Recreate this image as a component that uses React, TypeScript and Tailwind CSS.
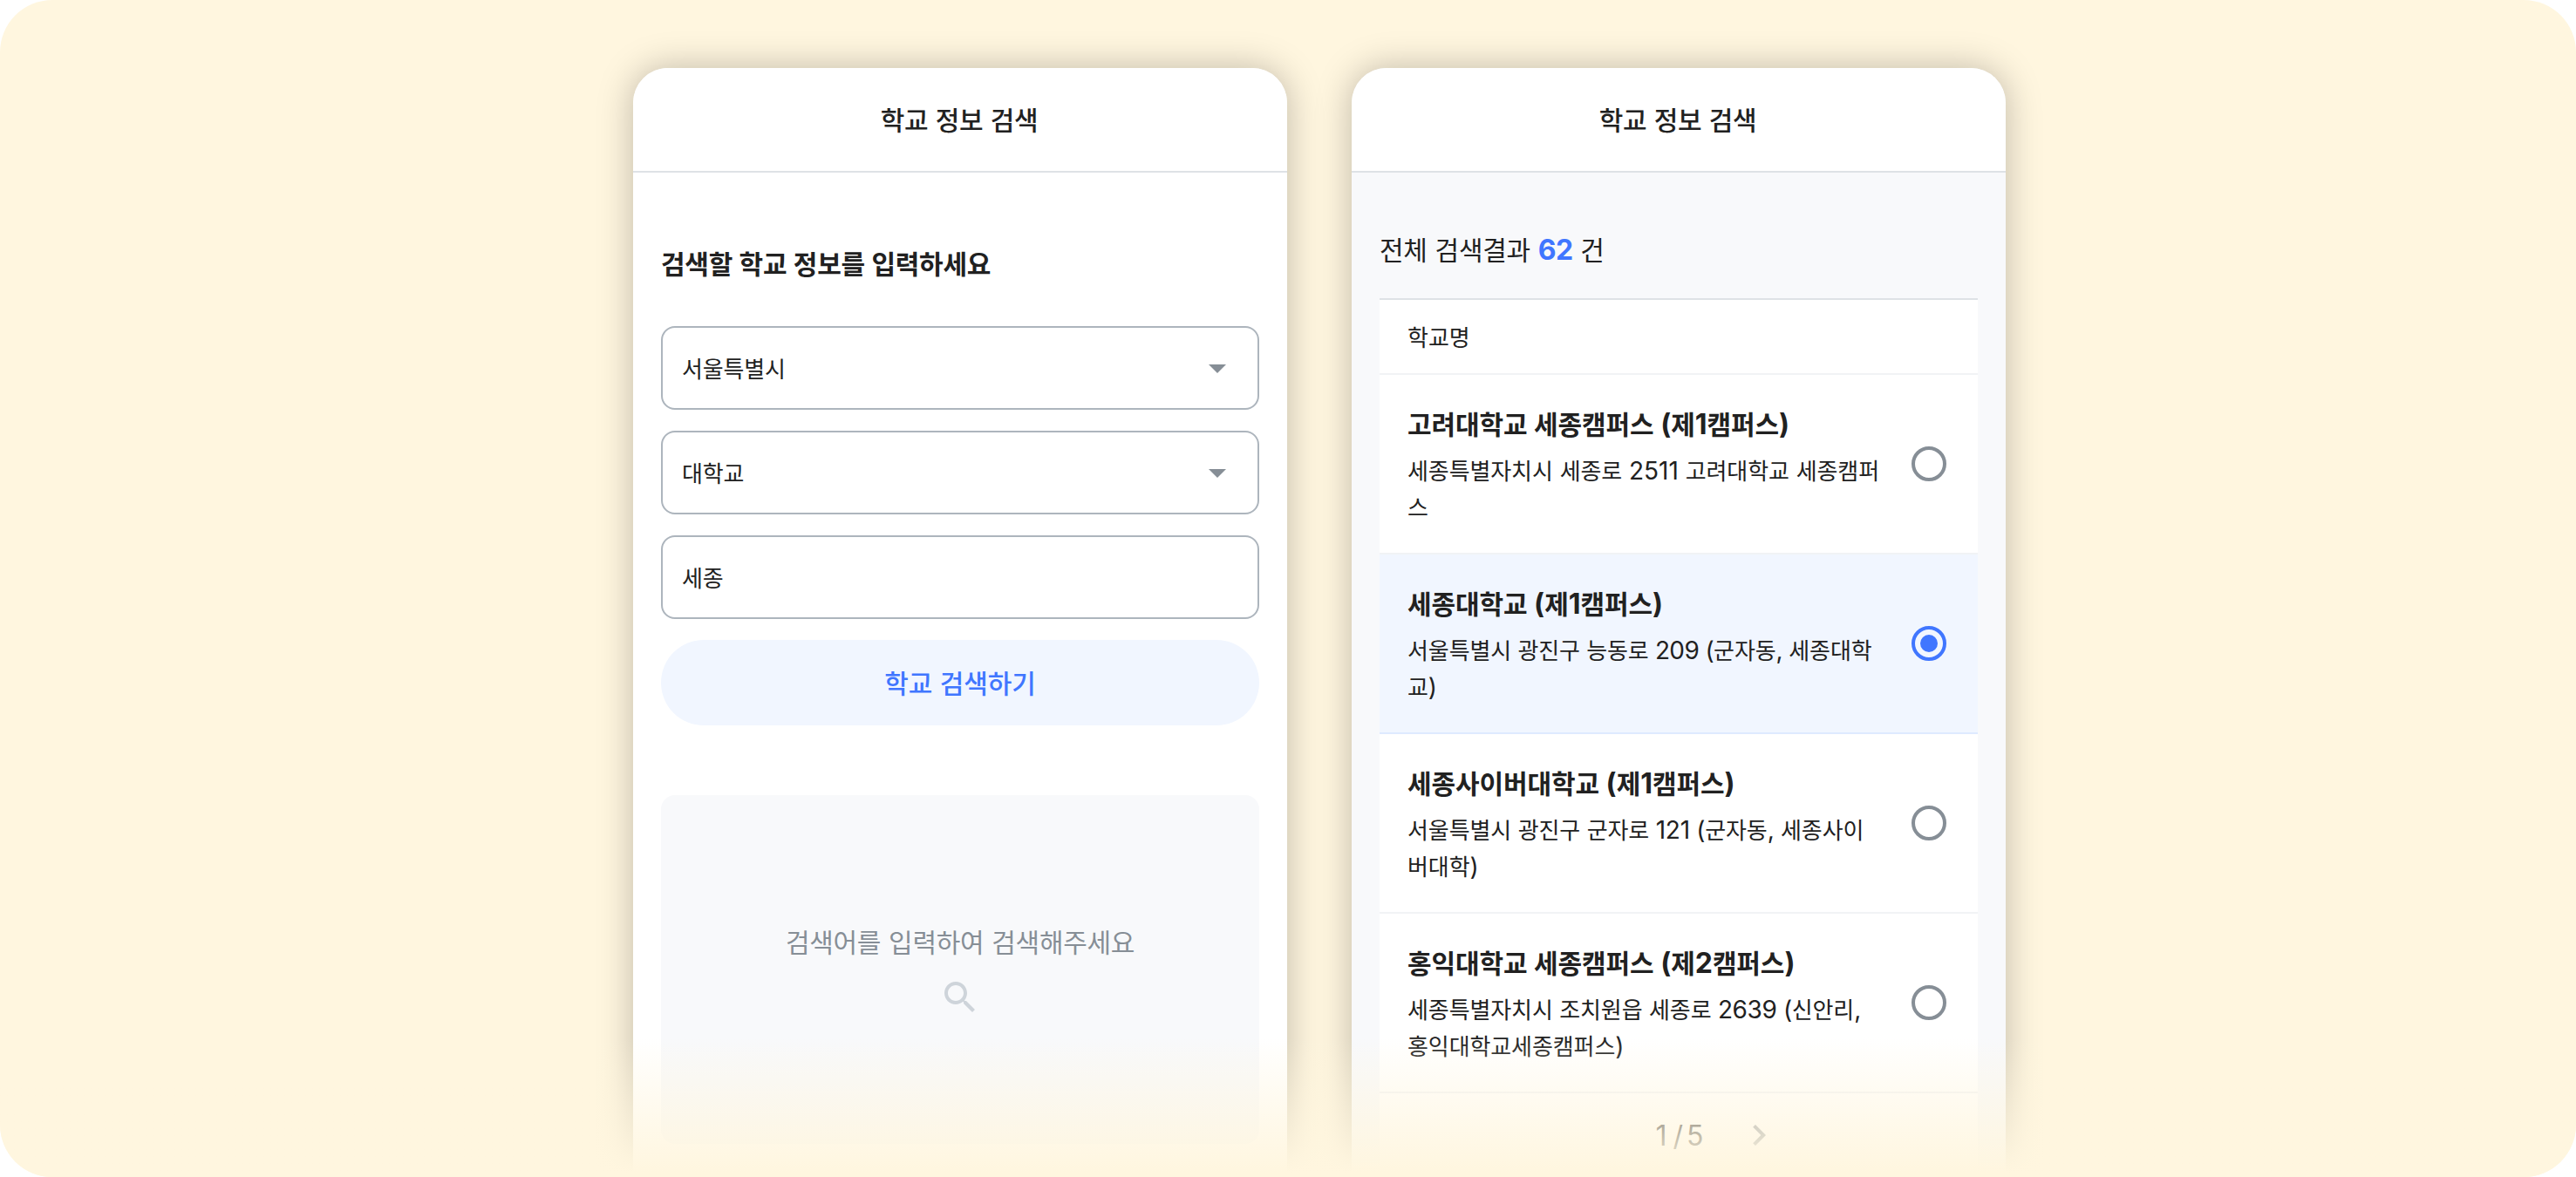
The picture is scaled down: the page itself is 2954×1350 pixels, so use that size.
import type { ReactNode } from "react";

type LineProps = { text: string; size: "lg" | "md"; hangul?: string; latin?: string };

/** One run of mixed Korean and Latin text; Hangul is set slightly smaller than Latin to balance the two fonts. */
function Mixed({ text, size, hangul = "", latin = "" }: LineProps) {
  const parts = text.split(/([\uac00-\ud7a3]+)/).filter(Boolean);
  return (
    <>
      {parts.map((part, i) =>
        /[\uac00-\ud7a3]/.test(part) ? (
          <span key={i} className={`leading-[0] ${size === "lg" ? "text-[30px]" : "text-[26px]"} ${hangul}`}>
            {part}
          </span>
        ) : (
          <span key={i} className={latin}>
            {part}
          </span>
        ),
      )}
    </>
  );
}

function Large({ children, className = "" }: { children: ReactNode; className?: string }) {
  return <p className={`-mb-px whitespace-pre pt-px text-[32px] leading-[48px] ${className}`}>{children}</p>;
}

function Medium({ children, className = "" }: { children: ReactNode; className?: string }) {
  return <p className={`-mb-px whitespace-pre pt-px text-[28px] leading-[42px] ${className}`}>{children}</p>;
}

function Phone({ children, className }: { children: ReactNode; className: string }) {
  return (
    <section
      className={`flex h-[1272px] w-[750px] shrink-0 flex-col overflow-hidden rounded-t-[40px] shadow-[0_0_40px_rgba(0,0,0,0.25)] ${className}`}
    >
      <header className="flex h-[120px] shrink-0 items-center justify-center border-b-2 border-[#dee2e6] bg-white pr-0.5">
        <Large className="font-medium">
          <Mixed text="학교 정보 검색" size="lg" hangul="tracking-[-0.4px]" />
        </Large>
      </header>
      {children}
    </section>
  );
}

function Field({ value, select = false }: { value: string; select?: boolean }) {
  return (
    <div className="flex h-24 items-center justify-between rounded-2xl border-2 border-[#adb5bd] bg-white px-[22px]">
      <Medium>
        <Mixed text={value} size="md" hangul="tracking-[-0.15px]" />
      </Medium>
      {select && (
        <svg className="size-12 fill-[#868e96]" viewBox="0 0 24 24">
          <path d="M7 10l5 5 5-5z" />
        </svg>
      )}
    </div>
  );
}

function Radio({ checked }: { checked: boolean }) {
  return (
    <span
      className={`mr-1 flex size-10 shrink-0 items-center justify-center rounded-full border-4 ${checked ? "border-[#4076ff]" : "border-[#868e96]"}`}
    >
      {checked && <span className="size-5 rounded-full bg-[#4076ff]" />}
    </span>
  );
}

const schools = [
  {
    name: "고려대학교 세종캠퍼스 (제1캠퍼스)",
    address: ["세종특별자치시 세종로 2511 고려대학교 세종캠퍼", "스"],
    latin: "",
  },
  {
    name: "세종대학교 (제1캠퍼스)",
    address: ["서울특별시 광진구 능동로 209 (군자동, 세종대학", "교)"],
    latin: "tracking-[-0.6px]",
    checked: true,
  },
  {
    name: "세종사이버대학교 (제1캠퍼스)",
    address: ["서울특별시 광진구 군자로 121 (군자동, 세종사이", "버대학)"],
    latin: "tracking-[-0.3px]",
  },
  {
    name: "홍익대학교 세종캠퍼스 (제2캠퍼스)",
    address: ["세종특별자치시 조치원읍 세종로 2639 (신안리,", "홍익대학교세종캠퍼스)"],
    latin: "tracking-[-0.4px]",
  },
];

export default function App() {
  return (
    <div className="h-[1350px] w-[2954px] overflow-hidden bg-white">
      <main className="relative flex h-full gap-[74px] overflow-hidden rounded-[60px] bg-[#fff6df] pl-[726px] pt-[78px] font-['Inter','Noto_Sans_CJK_KR',sans-serif] text-[#212121]">
        <Phone className="bg-white">
          <div className="flex flex-col px-8 pt-20">
            <Large className="font-bold">
              <Mixed text="검색할 학교 정보를 입력하세요" size="lg" hangul="tracking-[-0.27px]" />
            </Large>
            <div className="mt-12 flex flex-col gap-6">
              <Field value="서울특별시" select />
              <Field value="대학교" select />
              <Field value="세종" />
              <button className="flex h-[98px] items-center justify-center rounded-full bg-[#f1f6ff] text-[#4076ff]">
                <Large className="font-medium">
                  <Mixed text="학교 검색하기" size="lg" hangul="tracking-[-0.1px]" />
                </Large>
              </button>
            </div>
            <div className="mt-20 flex h-[400px] flex-col items-center justify-center gap-4 rounded-2xl bg-[#f8f9fb]">
              <Large className="text-[#868e96]">
                <Mixed text="검색어를 입력하여 검색해주세요" size="lg" hangul="tracking-[-0.3px]" />
              </Large>
              <svg className="size-12 fill-[#ced4da]" viewBox="0 0 24 24">
                <path d="M15.5 14h-.79l-.28-.27C15.41 12.59 16 11.11 16 9.5 16 5.91 13.09 3 9.5 3S3 5.91 3 9.5 5.91 16 9.5 16c1.61 0 3.09-.59 4.23-1.57l.27.28v.79l5 4.99L20.49 19l-4.99-5zm-6 0C7.01 14 5 11.99 5 9.5S7.01 5 9.5 5 14 7.01 14 9.5 11.99 14 9.5 14z" />
              </svg>
            </div>
          </div>
        </Phone>

        <Phone className="bg-[#f8f9fb]">
          <div className="flex flex-col px-8 pt-16">
            <Large>
              <Mixed text="전체 검색결과 " size="lg" hangul="tracking-[-0.3px]" />
              <strong className="font-bold tracking-[-0.5px] text-[#4076ff]">62</strong>
              <Mixed text=" 건" size="lg" latin="tracking-[-0.5px]" />
            </Large>
            <div className="mt-8 border-t-2 border-[#dee2e6] bg-white">
              <div className="flex h-[86px] items-center border-b-2 border-[#f1f3f5] px-8">
                <Medium>
                  <Mixed text="학교명" size="md" />
                </Medium>
              </div>
              <ul>
                {schools.map((s) => (
                  <li
                    key={s.name}
                    className={`flex h-[206px] items-center justify-between border-b-2 px-8 ${s.checked ? "border-[#deeaff] bg-[#f1f6ff]" : "border-[#f1f3f5]"}`}
                  >
                    <div className="flex flex-col gap-2">
                      <Large className="font-bold">
                        <Mixed text={s.name} size="lg" hangul="tracking-[-0.1px]" />
                      </Large>
                      <Medium>
                        <Mixed text={s.address[0]} size="md" hangul="tracking-[-0.1px]" latin={s.latin} />
                        <br />
                        <Mixed text={s.address[1]} size="md" hangul="tracking-[-0.1px]" />
                      </Medium>
                    </div>
                    <Radio checked={!!s.checked} />
                  </li>
                ))}
              </ul>
              <div className="mx-auto flex h-24 w-[232px] items-center justify-between">
                <span className="size-12" />
                <Large className="pl-0.5">
                  1<span className="ml-[7px] mr-[4px]">/</span>5
                </Large>
                <svg className="size-12 fill-[#868e96]" viewBox="0 0 24 24">
                  <path d="M10 6L8.59 7.41 13.17 12l-4.58 4.59L10 18l6-6z" />
                </svg>
              </div>
            </div>
          </div>
        </Phone>

        <div className="pointer-events-none absolute inset-x-0 bottom-0 h-40 bg-linear-to-b from-[#fff6df]/0 to-[#fff6df] to-97%" />
      </main>
    </div>
  );
}
